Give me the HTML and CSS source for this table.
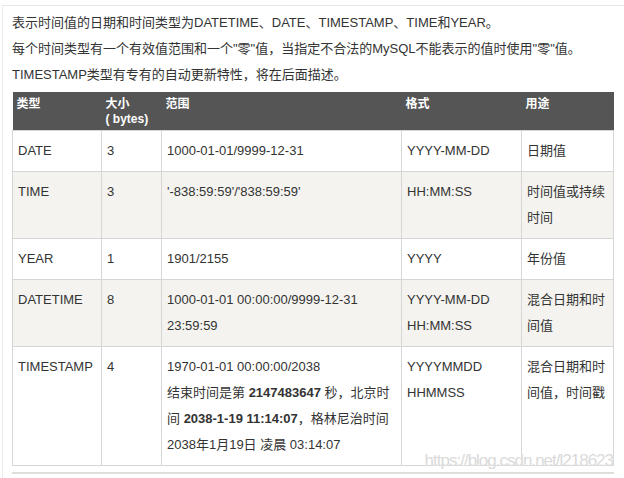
FILE: index.html
```html
<!DOCTYPE html>
<html lang="zh-CN">
<head>
<meta charset="utf-8">
<title>MySQL 日期和时间类型</title>
<link rel="stylesheet" href="styles.css">
</head>
<body>
<div class="page">
  <p>表示时间值的日期和时间类型为DATETIME、DATE、TIMESTAMP、TIME和YEAR。</p>
  <p>每个时间类型有一个有效值范围和一个"零"值，当指定不合法的MySQL不能表示的值时使用"零"值。</p>
  <p>TIMESTAMP类型有专有的自动更新特性，将在后面描述。</p>
  <table class="types">
    <colgroup>
      <col class="c-type"><col class="c-size"><col class="c-range"><col class="c-fmt"><col class="c-use">
    </colgroup>
    <thead>
      <tr><th>类型</th><th>大小<br>( bytes)</th><th>范围</th><th>格式</th><th>用途</th></tr>
    </thead>
    <tbody>
      <tr><td>DATE</td><td>3</td><td>1000-01-01/9999-12-31</td><td>YYYY-MM-DD</td><td>日期值</td></tr>
      <tr class="alt"><td>TIME</td><td>3</td><td>'-838:59:59'/'838:59:59'</td><td>HH:MM:SS</td><td>时间值或持续时间</td></tr>
      <tr><td>YEAR</td><td>1</td><td>1901/2155</td><td>YYYY</td><td>年份值</td></tr>
      <tr class="alt"><td>DATETIME</td><td>8</td><td>1000-01-01 00:00:00/9999-12-31 23:59:59</td><td>YYYY-MM-DD HH:MM:SS</td><td>混合日期和时间值</td></tr>
      <tr><td>TIMESTAMP</td><td>4</td><td>1970-01-01 00:00:00/2038<br>结束时间是第 <b>2147483647</b> 秒，北京时<br>间 <b>2038-1-19 11:14:07</b>，格林尼治时间<br>2038年1月19日 凌晨 03:14:07</td><td>YYYYMMDD HHMMSS</td><td>混合日期和时间值，时间戳</td></tr>
    </tbody>
  </table>
  <div class="rule"></div>
  <div class="watermark">https://blog.csdn.net/l218623</div>
</div>
</body>
</html>
```
FILE: styles.css
```css
html, body {
  margin: 0;
  padding: 0;
  background: #fff;
}
body {
  font-family: "Liberation Sans", "Noto Sans CJK SC", sans-serif;
  font-size: 13px;
  color: #333;
}
.page {
  position: relative;
  margin: 5px 0 0 2px;
  border-top: 1px solid #e6e6e6;
  border-left: 1px solid #ececec;
  padding: 4px 10px 0 9px;
  height: 480px;
  box-sizing: border-box;
  overflow: hidden;
}
.page p {
  margin: 0;
  line-height: 26px;
}
.types {
  margin-top: 4px;
  width: 602px;
  border-collapse: collapse;
  table-layout: fixed;
}
.c-type { width: 89px; }
.c-size { width: 60px; }
.c-range { width: 240px; }
.c-fmt { width: 120px; }
.c-use { width: 92px; }
.types th {
  background: #555;
  color: #fff;
  font-size: 12px;
  font-weight: bold;
  line-height: 15px;
  text-align: left;
  vertical-align: top;
  padding: 5px 4px 3px;
  border: none;
}
.types td {
  border: 1px solid #d6d6d6;
  padding: 7px 5px 7px;
  line-height: 26px;
  vertical-align: top;
}
.types tr.alt td {
  background: #f4f3f0;
}
.types b {
  font-weight: bold;
}
.rule {
  margin-top: 6px;
  width: 602px;
  border-top: 2px solid #dedede;
}
.watermark {
  position: absolute;
  top: 446px;
  right: 11px;
  font-family: "Liberation Sans", sans-serif;
  font-size: 17px;
  line-height: 17px;
  letter-spacing: -1px;
  color: #dadada;
  text-shadow: 0 0 1px #fff;
  white-space: nowrap;
}
```
